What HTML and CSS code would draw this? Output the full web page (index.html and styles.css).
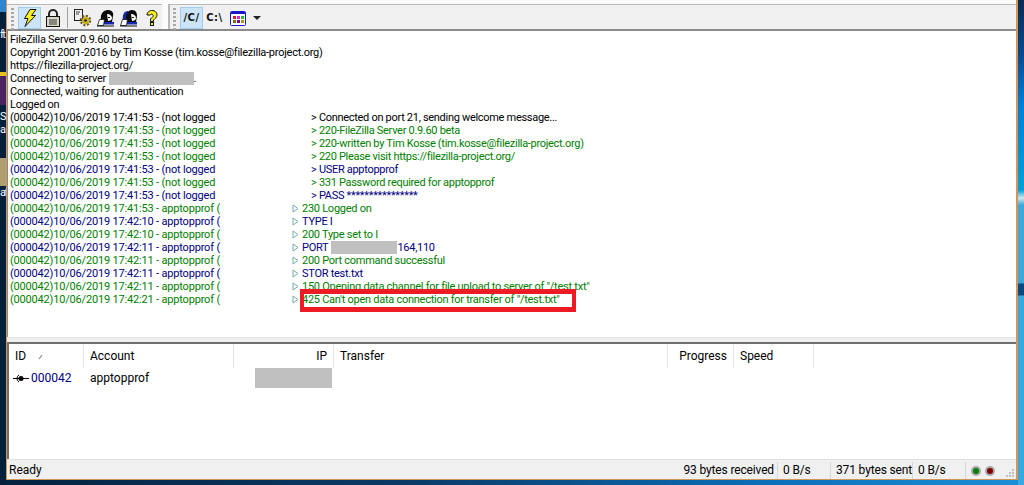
FILE: index.html
```html
<!DOCTYPE html>
<html>
<head>
<meta charset="utf-8">
<title>FileZilla Server</title>
<link rel="stylesheet" href="styles.css">
</head>
<body>
<div class="desk-left">
  <span class="d1"></span><span class="d2">ft</span><span class="d3"></span><span class="d4"></span><span class="d5">S</span><span class="d6">a</span><span class="d7"></span><span class="d8"></span><span class="d9">at</span>
</div>
<div class="desk-right"></div>
<div class="window">
  <div class="toolbar">
    <div class="band band-a">
      <i class="grip"></i>
      <button class="tb on"><svg width="16" height="18" viewBox="0 0 16 18"><path d="M8 .5h6L9.500 6.500h4L3 17.500l3-8H2.500z" fill="#f7f01e" stroke="#111" stroke-width="1"/></svg></button>
      <button class="tb"><svg width="16" height="18" viewBox="0 0 16 18"><path d="M4 8V5a4 4 0 0 1 8 0v3" fill="none" stroke="#222" stroke-width="2"/><rect x="1.500" y="7.500" width="13" height="10" fill="#d8d8c8" stroke="#111"/><path d="M4 11h8M4 13h8M4 15h8" stroke="#333"/></svg></button>
      <i class="sep"></i>
      <button class="tb"><svg width="18" height="18" viewBox="0 0 18 18"><rect x=".5" y=".5" width="8" height="11" fill="#eee" stroke="#222"/><path d="M2 3h4M2 5h3" stroke="#444"/><circle cx="11.500" cy="11.500" r="4.500" fill="none" stroke="#6b5a10" stroke-width="2.500" stroke-dasharray="2 1.500"/><circle cx="11.500" cy="11.500" r="3.500" fill="#c8b020"/><circle cx="11.500" cy="11.500" r="1.300" fill="#222"/></svg></button>
      <button class="tb"><svg width="18" height="18" viewBox="0 0 18 18"><path d="M4 12C3 5 6 1 11 1c4 0 6 3 5 6l-1 6H4z" fill="#0a0a0a"/><path d="M10 5c3 0 5 2 5 4 0 2-2 3-4 3z" fill="#fff"/><path d="M11 8h2v1h-2z" fill="#111"/><path d="M4 13h13v2.500H4z" fill="#1428b0"/><path d="M.5 16.500l2-6h5l-1 6z" fill="#fff" stroke="#111" stroke-width=".8"/><path d="M0 17h17" stroke="#111"/></svg></button>
      <button class="tb"><svg width="18" height="18" viewBox="0 0 18 18"><path d="M3 12C2 6 4 2 8 2l1 10z" fill="#1428b0"/><path d="M6 12C5 5 8 1 12 1c4 0 5 3 5 6l-1 6H6z" fill="#0a0a0a"/><path d="M11 5c3 0 5 2 5 4 0 2-2 3-4 3z" fill="#fff"/><path d="M12 8h2v1h-2z" fill="#111"/><path d="M4 13h13v2.500H4z" fill="#1428b0"/><path d="M.5 16.500l2-6h5l-1 6z" fill="#fff" stroke="#111" stroke-width=".8"/><path d="M0 17h17" stroke="#111"/></svg></button>
      <button class="tb"><svg width="12" height="16" viewBox="0 0 12 16"><path d="M1 5a5 4.500 0 1 1 8 3.500L7.500 10v1.500h-3V9l2.500-2.500A1.500 1.500 0 1 0 4.200 5z" fill="#f7ee1a" stroke="#111"/><rect x="4.500" y="12.500" width="3" height="3" fill="#f7ee1a" stroke="#111"/></svg></button>
    </div>
    <div class="band band-b">
      <i class="grip"></i>
      <button class="tb on tx">/C/</button>
      <button class="tb tx">C:\</button>
      <button class="tb"><svg width="16" height="15" viewBox="0 0 16 15"><rect x=".5" y=".5" width="15" height="14" rx="1" fill="#fff" stroke="#1818c8"/><rect x="1" y="1" width="14" height="2" fill="#1818c8"/><rect x="3" y="5" width="3" height="3" fill="#e02020"/><rect x="7" y="5" width="3" height="3" fill="#e020e0"/><rect x="11" y="5" width="3" height="3" fill="#20c020"/><rect x="3" y="9" width="3" height="3" fill="#707000"/><rect x="7" y="9" width="3" height="3" fill="#800080"/><rect x="11" y="9" width="3" height="3" fill="#a0a000"/></svg></button>
      <i class="caret"></i>
    </div>
  </div>

  <div class="log">
    <p>FileZilla Server 0.9.60 beta</p>
    <p>Copyright 2001-2016 by Tim Kosse (tim.kosse@filezilla-project.org)</p>
    <p>https://filezilla-project.org/</p>
    <p>Connecting to server <b class="mask m-server"></b>.</p>
    <p>Connected, waiting for authentication</p>
    <p>Logged on</p>
    <div class="row"><span class="who">(000042)10/06/2019 17:41:53 - (not logged</span><span class="far">&gt; Connected on port 21, sending welcome message...</span></div>
    <div class="row g"><span class="who">(000042)10/06/2019 17:41:53 - (not logged</span><span class="far">&gt; 220-FileZilla Server 0.9.60 beta</span></div>
    <div class="row g"><span class="who">(000042)10/06/2019 17:41:53 - (not logged</span><span class="far">&gt; 220-written by Tim Kosse (tim.kosse@filezilla-project.org)</span></div>
    <div class="row g"><span class="who">(000042)10/06/2019 17:41:53 - (not logged</span><span class="far">&gt; 220 Please visit https://filezilla-project.org/</span></div>
    <div class="row n"><span class="who">(000042)10/06/2019 17:41:53 - (not logged</span><span class="far">&gt; USER apptopprof</span></div>
    <div class="row g"><span class="who">(000042)10/06/2019 17:41:53 - (not logged</span><span class="far">&gt; 331 Password required for apptopprof</span></div>
    <div class="row n"><span class="who">(000042)10/06/2019 17:41:53 - (not logged</span><span class="far">&gt; PASS ****************</span></div>
    <div class="row g"><span class="who wide">(000042)10/06/2019 17:41:53 - apptopprof (</span><span class="near"><svg class="ar" width="7" height="9" viewBox="0 0 7 9"><path d="M1 1l5 3.500-5 3.500z" fill="none" stroke="#7aa"/></svg>230 Logged on</span></div>
    <div class="row n"><span class="who wide">(000042)10/06/2019 17:42:10 - apptopprof (</span><span class="near"><svg class="ar" width="7" height="9" viewBox="0 0 7 9"><path d="M1 1l5 3.500-5 3.500z" fill="none" stroke="#7aa"/></svg>TYPE I</span></div>
    <div class="row g"><span class="who wide">(000042)10/06/2019 17:42:10 - apptopprof (</span><span class="near"><svg class="ar" width="7" height="9" viewBox="0 0 7 9"><path d="M1 1l5 3.500-5 3.500z" fill="none" stroke="#7aa"/></svg>200 Type set to I</span></div>
    <div class="row n"><span class="who wide">(000042)10/06/2019 17:42:11 - apptopprof (</span><span class="near"><svg class="ar" width="7" height="9" viewBox="0 0 7 9"><path d="M1 1l5 3.500-5 3.500z" fill="none" stroke="#7aa"/></svg>PORT <b class="mask m-port"></b>164,110</span></div>
    <div class="row g"><span class="who wide">(000042)10/06/2019 17:42:11 - apptopprof (</span><span class="near"><svg class="ar" width="7" height="9" viewBox="0 0 7 9"><path d="M1 1l5 3.500-5 3.500z" fill="none" stroke="#7aa"/></svg>200 Port command successful</span></div>
    <div class="row n"><span class="who wide">(000042)10/06/2019 17:42:11 - apptopprof (</span><span class="near"><svg class="ar" width="7" height="9" viewBox="0 0 7 9"><path d="M1 1l5 3.500-5 3.500z" fill="none" stroke="#7aa"/></svg>STOR test.txt</span></div>
    <div class="row g"><span class="who wide">(000042)10/06/2019 17:42:11 - apptopprof (</span><span class="near"><svg class="ar" width="7" height="9" viewBox="0 0 7 9"><path d="M1 1l5 3.500-5 3.500z" fill="none" stroke="#7aa"/></svg>150 Opening data channel for file upload to server of "/test.txt"</span></div>
    <div class="row g"><span class="who wide">(000042)10/06/2019 17:42:21 - apptopprof (</span><span class="near"><svg class="ar" width="7" height="9" viewBox="0 0 7 9"><path d="M1 1l5 3.500-5 3.500z" fill="none" stroke="#7aa"/></svg>425 Can't open data connection for transfer of "/test.txt"</span></div>
    <div class="callout"></div>
  </div>

  <div class="splitter"></div>

  <div class="list">
    <div class="head">
      <span class="c-id">ID<svg class="sort" width="6" height="6" viewBox="0 0 6 6"><path d="M1 5 4 1" stroke="#888" stroke-width="1.200"/></svg></span>
      <span class="c-acc">Account</span>
      <span class="c-ip">IP</span>
      <span class="c-tr">Transfer</span>
      <span class="c-pr">Progress</span>
      <span class="c-sp">Speed</span>
    </div>
    <div class="conn">
      <span class="c-id plain"><svg class="plug" width="16" height="9" viewBox="0 0 16 9"><path d="M0 4.500h16" stroke="#000"/><circle cx="8" cy="4.500" r="2.500" fill="#000"/><path d="M6 1A4 4 0 0 0 6 8" fill="none" stroke="#000"/></svg><span class="cid">000042</span></span>
      <span class="c-acc plain">apptopprof</span>
      <span class="c-ip plain"><b class="mask m-ip"></b></span>
    </div>
  </div>

  <div class="status">
    <span class="s-main">Ready</span>
    <span class="s-cell s-rx">93 bytes received</span>
    <span class="s-cell s-rr">0 B/s</span>
    <span class="s-cell s-tx">371 bytes sent</span>
    <span class="s-cell s-tr">0 B/s</span>
    <span class="s-cell s-led"><i class="led green"></i><i class="led red"></i></span>
    <svg class="corner" width="9" height="9" viewBox="0 0 9 9"><path d="M6 0h2v2H6zM3 3h2v2H3zM6 3h2v2H6zM0 6h2v2H0zM3 6h2v2H3zM6 6h2v2H6z" fill="#c0c0c0"/></svg>
  </div>
</div>
</body>
</html>
```
FILE: styles.css
```css
* { box-sizing: border-box; }
html, body { margin: 0; height: 485px; overflow: hidden; }
body {
  position: relative;
  background: linear-gradient(90deg, #04233f 0%, #0a3a66 40%, #0b6fb8 75%, #1b8fd6 100%);
  font: 12px/13px Roboto, "Noto Sans", sans-serif;
  color: #000;
  white-space: nowrap;
}
.desk-left { position: absolute; left: 0; top: 0; width: 6px; height: 485px; overflow: hidden; display: flex; flex-direction: column; background: #06203a; color: #fff; font-size: 11px; letter-spacing: -1.5px; }
.desk-left span { display: block; flex: none; line-height: 13px; }
.d1 { height: 12px; background: #2f86cf; }
.d2 { height: 60px; padding-top: 16px; }
.d3 { height: 33px; background: #4a2560; border-top: 4px solid #e6c020; }
.d4 { height: 5px; }
.d5 { height: 13px; }
.d6 { height: 27px; }
.d7 { height: 8px; }
.d8 { height: 28px; background: #b0a070; }
.d9 { height: 20px; }
.desk-right { position: absolute; right: 0; top: 0; width: 6px; height: 485px; background: linear-gradient(180deg, #0a2a50 0, #0a4a90 55px, #0080d8 105px, #00a0d8 190px, #d0e8f0 198px, #40a8d8 205px, #40a8d8 283px, #0a4a80 284px, #0a4a80 295px, #38a8e0 296px); }

.window {
  position: absolute; left: 6px; top: 0; width: 1012px; height: 480px;
  border: solid #d0965a; border-width: 0 2px 1px 1px;
  display: flex; flex-direction: column; background: #f0f0f0;
}

.toolbar { height: 31px; flex: none; display: flex; background: #fbfbfb; border-top: 4px solid #fbfbfb; border-bottom: 2px solid #8a8a8a; }
.band { display: flex; align-items: flex-start; padding-top: 2px; border-top: 1px solid #b8b8b8; }
.band-a { width: 155px; padding-left: 4px; background: #f0f0f0; }
.band-b { margin-left: 6px; padding-left: 3px; border-left: 2px solid #b8b8b8; flex: 1; background: #f0f0f0; }
.grip { width: 3px; height: 22px; margin: 1px 4px 0 0; flex: none; background: repeating-linear-gradient(180deg, #a8a8a8 0 2px, transparent 2px 4px); }
.tb {
  width: 23px; height: 22px; margin: 0; padding: 0; flex: none;
  display: flex; align-items: center; justify-content: center;
  background: transparent; border: 1px solid transparent;
}
.tb.on { background: #cce4f7; border-color: #9fcdf0; }
.tx { font: bold 10px/1 "DejaVu Sans", sans-serif; letter-spacing: .5px; color: #111; }
.sep { width: 1px; height: 21px; margin: 0 3px; background: #a0a0a0; flex: none; }
.caret { width: 0; height: 0; margin: 9px 0 0 4px; border: solid transparent; border-width: 4px 4px 0; border-top-color: #222; }

.log {
  position: relative; height: 306px; flex: none;
  padding: 2px 0 0 2px; background: #fff;
  border-left: 1px solid #8a8a8a; overflow: hidden;
  font-size: 11px; letter-spacing: -.25px;
}
.log p { margin: 0; height: 13px; }
.row { display: flex; height: 13px; color: #000; }
.row.g { color: #008000; }
.row.n { color: #000080; }
.who { flex: none; width: 206px; margin-right: 95px; letter-spacing: -.18px; }
.who.wide { width: 210px; margin-right: 72px; }
.far { letter-spacing: -.3px; }
.near { display: flex; align-items: center; letter-spacing: -.265px; }
.ar { flex: none; margin-right: 3px; }
.mask { display: inline-block; background: #c0c0c0; vertical-align: top; }
.m-server { width: 85px; height: 13px; }
.m-port { width: 66px; height: 13px; margin-left: 3px; }
.m-ip { width: 77px; height: 20px; }
.callout { position: absolute; left: 292px; top: 258px; width: 276px; height: 23px; border: solid #ed1c24; border-width: 5px 4px; }

.splitter { height: 6px; flex: none; background: #f0f0f0; border-top: 1px solid #e4e4e4; border-bottom: 1px solid #6f6f6f; }

.list { flex: 1; background: #fff; border-left: 2px solid #6f6f6f; border-top: 1px solid #6f6f6f; }
.head { display: flex; height: 24px; color: #000; }
.head span { height: 24px; line-height: 24px; border-right: 1px solid #e5e5e5; padding: 0 6px; flex: none; }
.c-id { width: 75px; }
.c-acc { width: 150px; }
.c-ip { width: 100px; text-align: right; }
.c-tr { width: 334px; }
.c-pr { width: 66px; text-align: right; }
.c-sp { width: 80px; }
.sort { margin-left: 12px; }
.conn { display: flex; height: 20px; }
.conn span.plain { flex: none; line-height: 20px; }
.c-id.plain { display: flex; align-items: center; padding-left: 4px; }
.c-acc.plain { padding-left: 6px; }
.c-ip.plain { padding-left: 21px; text-align: left; }
.plug { flex: none; margin-right: 2px; }
.cid { color: #000080; }

.status { height: 20px; flex: none; display: flex; align-items: center; padding-top: 2px; background: #f0f0f0; border-top: 1px solid #e2e2e2; }
.s-main { flex: 1; padding-left: 2px; }
.s-cell { height: 17px; line-height: 17px; padding: 0 3px 0 5px; border-right: 1px solid #d8d8d8; flex: none; letter-spacing: -.15px; }
.s-rx { width: 103px; text-align: right; }
.s-rr { width: 53px; }
.s-tx { width: 82px; text-align: right; }
.s-tr { width: 53px; }
.s-led { width: 40px; display: flex; align-items: center; gap: 4px; border-right: 0; }
.led { width: 10px; height: 10px; border-radius: 50%; border: 2px solid #a8a8a8; }
.green { background: #008000; }
.red { background: #800000; }
.corner { flex: none; margin: 6px 1px 0 0; }
```
